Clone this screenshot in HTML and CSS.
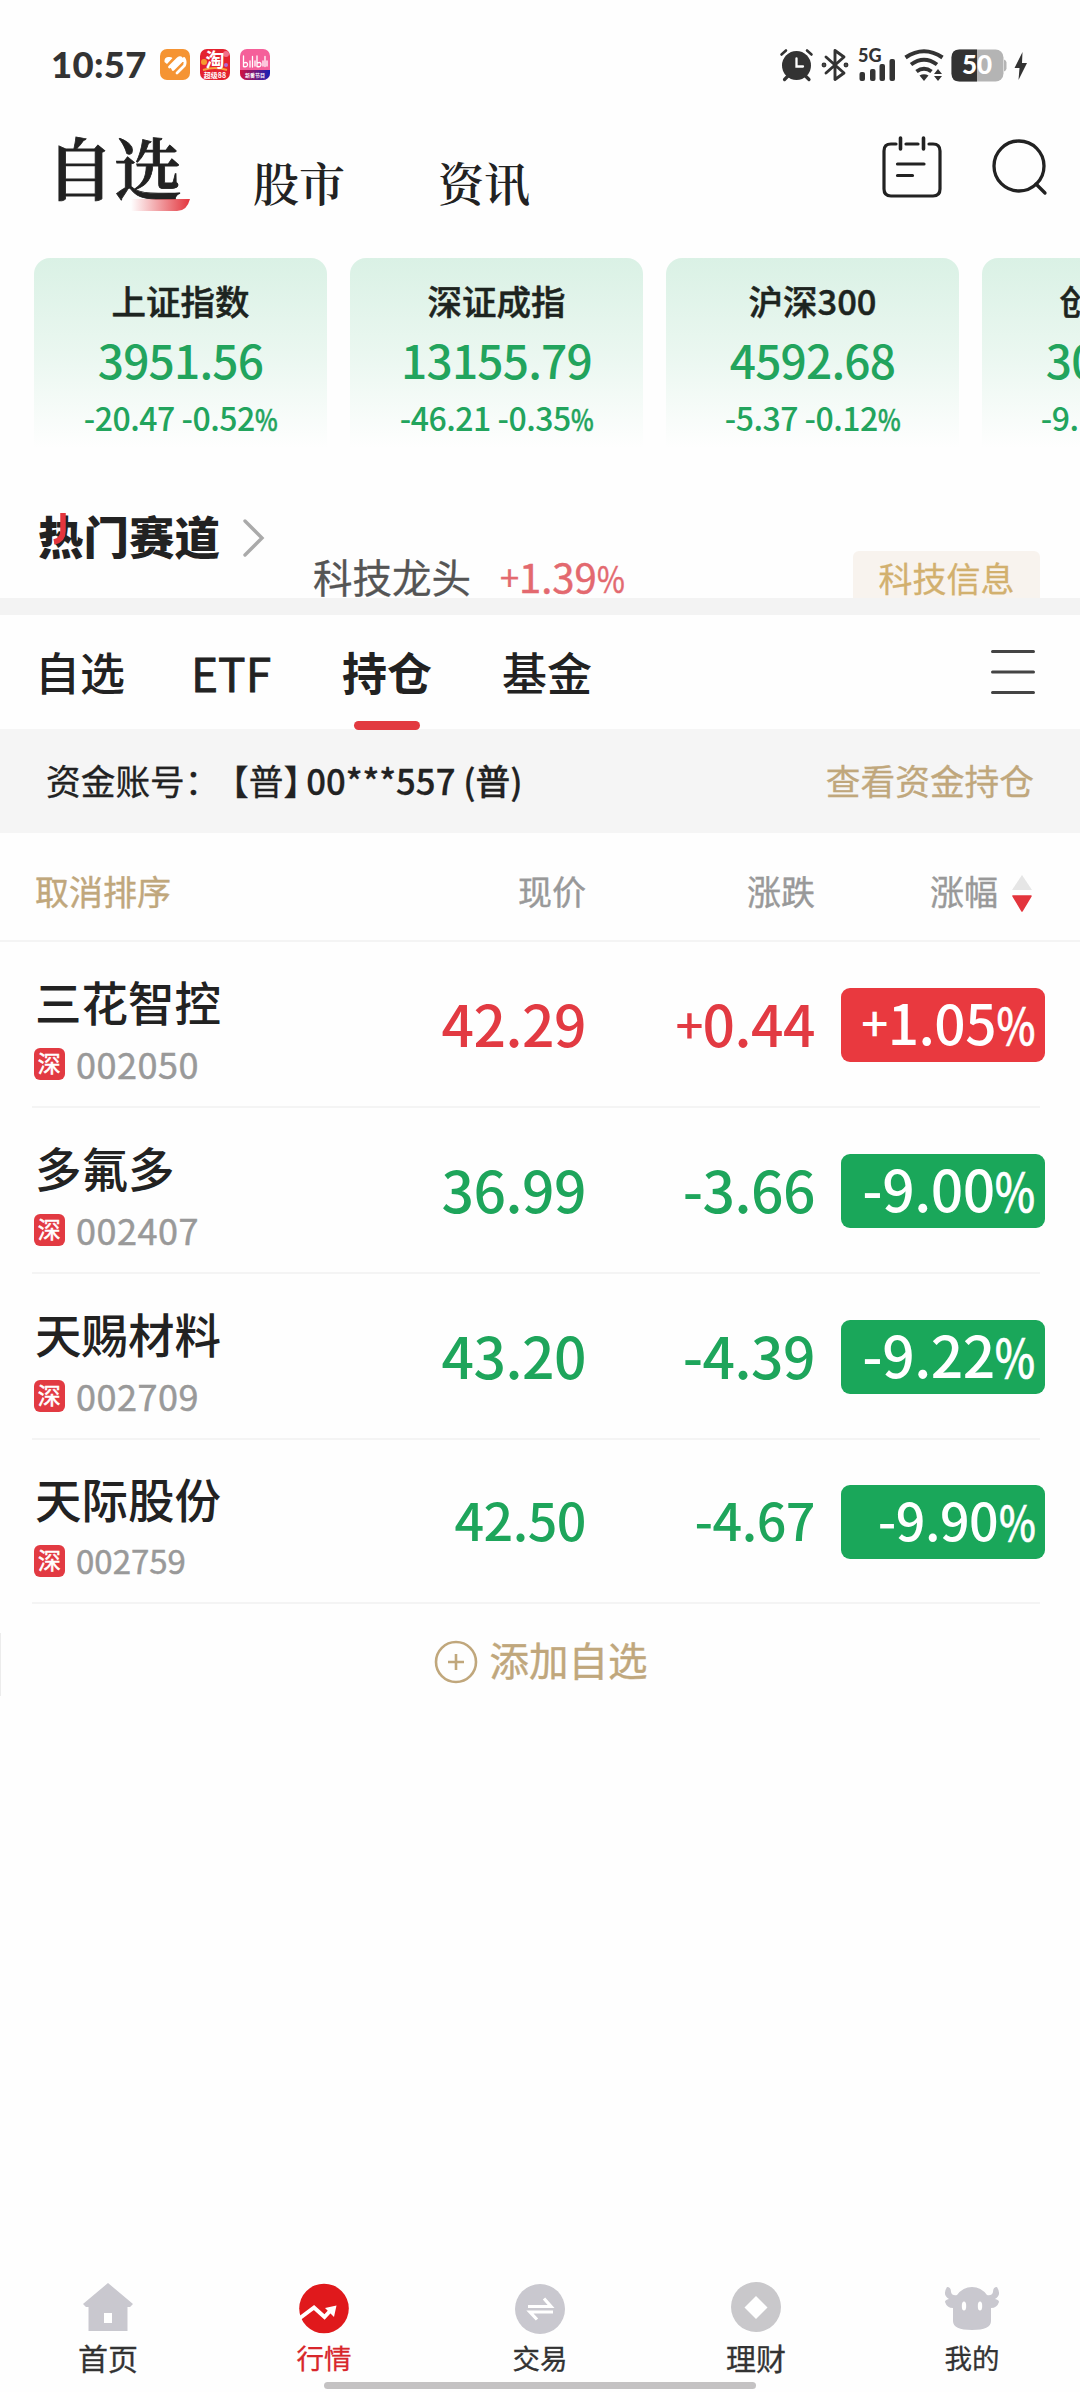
FILE: index.html
```html
<!DOCTYPE html>
<html lang="zh-CN">

<head>
	<meta charset="UTF-8">
	<title>自选 - 持仓</title>
	<meta name="viewport" content="width=device-width, initial-scale=1.0">
	<link rel="stylesheet" href="styles.css">
</head>

<body>

	<!-- Barre d'état -->
	<div class="statut">
		<span class="heure">10:57</span>
		<div class="applis">
			<svg width="30" height="31" viewBox="0 0 30 31">
				<rect width="30" height="31" rx="7" fill="#f59433" />
				<path d="M4.500 13 Q4 8.500 8 8 Q11 7.500 12.500 9 L7 15Z" fill="#fff" />
				<path d="M9.500 18 L17.500 10 Q20 7.500 21.500 9.500 L12 18.500 M17 24 L24.500 16.500 Q26 13 24 9.500 L13 20.500" fill="none" stroke="#fff" stroke-width="2.800" stroke-linecap="round" stroke-linejoin="round" />
			</svg>
			<svg width="30" height="31" viewBox="0 0 30 31">
				<rect width="30" height="31" rx="7" fill="#e4222f" />
				<circle cx="4" cy="13" r="3" fill="#f79a2e" />
				<circle cx="26" cy="5" r="3" fill="#f2718a" />
				<circle cx="26" cy="16" r="2" fill="#b06ad0" />
				<path d="M3 21 Q15 17 27 21" stroke="#f9a03c" stroke-width="2" fill="none" />
				<text x="15" y="18" class="mini" font-size="19">淘</text>
				<text x="15" y="29" class="mini" font-size="7">超级88</text>
			</svg>
			<svg width="30" height="31" viewBox="0 0 30 31">
				<defs>
					<linearGradient id="bas"><stop offset="0" stop-color="#d3123f" /><stop offset="1" stop-color="#1321b8" /></linearGradient>
					<clipPath id="coins"><rect width="30" height="31" rx="7" /></clipPath>
				</defs>
				<g clip-path="url(#coins)">
					<rect width="30" height="31" fill="#f5609a" />
					<rect y="21" width="30" height="10" fill="url(#bas)" />
				</g>
				<path d="M3.500 7V17.500q4 1 4-2t-3.500-1.500M10 12v6M12.500 7.500v10.500M15 12v5M17 7V17.500q4 1 4-2t-3.500-1.500M23 12v5M25 7.500v10M27 12v5" fill="none" stroke="#fff" stroke-width="1.300" stroke-linecap="round" />
				<text x="15" y="27.500" class="mini" font-size="5">新番节目</text>
			</svg>
		</div>
		<svg class="systeme" width="250" height="34" viewBox="0 0 250 34">
			<!-- alarme -->
			<g fill="none" stroke="#333" stroke-linecap="round">
				<circle cx="17.500" cy="17.500" r="14.500" fill="#333" stroke="none" />
				<path d="M2.500 6.500 L7 2.500 M28 2.500 L32.500 6.500" stroke-width="2.600" />
				<path d="M5.500 31.500 L9 28 M30 31.500 L26.500 28" stroke-width="3.200" />
				<path d="M17.500 10.500 V18.500 H24" stroke="#fff" stroke-width="2.300" />
			</g>
			<!-- bluetooth -->
			<g fill="none" stroke="#333" stroke-width="2.900">
				<path d="M47 9 L65 25 L56 31.500 V2.500 L65 9 L47 25" stroke-linejoin="round" stroke-linecap="round" />
				<circle cx="45" cy="17" r="1" />
				<circle cx="67" cy="17" r="1" />
			</g>
			<!-- réseau -->
			<text x="79" y="14" class="reseau">5G</text>
			<g fill="#333">
				<rect x="80.500" y="24" width="5.500" height="9" rx="2" />
				<rect x="91" y="21" width="5.500" height="12" rx="2" />
				<rect x="100.500" y="16" width="5.500" height="17" rx="2" />
				<rect x="110.500" y="11" width="5.500" height="22" rx="2" />
			</g>
			<!-- wifi -->
			<g fill="none" stroke="#333" stroke-width="4">
				<path d="M126.500 9.500 Q145 -3 163.500 9.500" />
				<path d="M132 16.500 Q145 7 158 16.500" />
				<path d="M137.500 23.500 Q145 18 152.500 23.500" />
			</g>
			<path d="M140.500 27.500 Q145 25 149.500 27.500 L145 33Z" fill="#333" />
			<path d="M159 21 L163 26 H155Z M159 33 L155 28 H163Z" fill="#333" />
			<!-- batterie -->
			<rect x="172.500" y="1.500" width="52" height="32" rx="8" fill="#b4b4b4" />
			<path d="M198 1.500 H180.500 Q172.500 1.500 172.500 9.500 V25.500 Q172.500 33.500 180.500 33.500 H198Z" fill="#333" />
			<path d="M225 11.500 q2.500 1 2.500 3 v6 q0 2 -2.500 3Z" fill="#b4b4b4" />
			<text x="198" y="26" class="charge">50</text>
			<path d="M243.500 4 L235.500 20 H240.500 L239.500 32 L248 15 H243Z" fill="#333" />
		</svg>
	</div>

	<!-- Titre -->
	<header class="entete">
		<a class="titre actif">自选<svg class="trait" width="60" height="12" viewBox="0 0 60 12">
				<defs><linearGradient id="rouge"><stop offset="0" stop-color="#e3353d" stop-opacity="0" /><stop offset="1" stop-color="#e3353d" /></linearGradient></defs>
				<path d="M0 0 H59 Q56 12 46 12 H0Z" fill="url(#rouge)" />
			</svg></a>
		<a class="titre">股市</a>
		<a class="titre">资讯</a>
		<svg class="agenda" width="60" height="64" viewBox="0 0 60 64" fill="none" stroke="#222" stroke-width="3.200" stroke-linecap="round">
			<path d="M14 10 H9 Q2 10 2 17 V55 Q2 62 9 62 H51 Q58 62 58 55 V17 Q58 10 51 10 H47 M24 10 H36" />
			<path d="M18.500 4 V15 M41.500 4 V15" stroke-width="3.600" />
			<path d="M15.500 30 H42 M15.500 41.500 H30.500" />
		</svg>
		<svg class="loupe" width="56" height="58" viewBox="0 0 56 58" fill="none" stroke="#222" stroke-width="3.300" stroke-linecap="round">
			<circle cx="27" cy="28" r="25" />
			<path d="M44 46 L53 55" />
		</svg>
	</header>

	<!-- Indices -->
	<section class="indices">
		<article class="indice">
			<h2>上证指数</h2>
			<strong>3951.56</strong>
			<p>-20.47 -0.52<i>%</i></p>
		</article>
		<article class="indice">
			<h2>深证成指</h2>
			<strong>13155.79</strong>
			<p>-46.21 -0.35<i>%</i></p>
		</article>
		<article class="indice">
			<h2>沪深300</h2>
			<strong>4592.68</strong>
			<p>-5.37 -0.12<i>%</i></p>
		</article>
		<article class="indice">
			<h2>创业板指</h2>
			<strong>3052.59</strong>
			<p>-9.17 -0.30<i>%</i></p>
		</article>
	</section>

	<!-- Secteurs -->
	<section class="secteurs">
		<h3>热门赛道<svg class="flamme" width="16" height="34" viewBox="0 0 16 34" fill="none" stroke="#e3353d" stroke-width="5.500">
				<path d="M11 1 V19 Q11 28 2 30" />
			</svg></h3>
		<svg class="chevron" width="22" height="40" viewBox="0 0 22 40" fill="none" stroke="#aaa" stroke-width="3.400" stroke-linecap="round">
			<path d="M2 3 L19 20 L2 37" />
		</svg>
		<span class="theme">科技龙头</span>
		<span class="hausse"><u>+</u>1.39<i>%</i></span>
		<span class="etiquette">科技信息</span>
	</section>

	<!-- Onglets -->
	<nav class="onglets">
		<a>自选</a>
		<a class="etf">ETF</a>
		<a class="actif">持仓</a>
		<a>基金</a>
		<svg width="46" height="46" viewBox="0 0 46 46" stroke="#444" stroke-width="3" stroke-linecap="round">
			<path d="M2.500 2.500 H43.500 M2.500 23 H43.500 M2.500 43.500 H43.500" />
		</svg>
	</nav>

	<div class="compte">
		<span>资金账号：<b class="ouvre">【</b>普】<b class="num">00***557 (普)</b></span>
		<a>查看资金持仓</a>
	</div>

	<!-- Liste -->
	<main>
		<div class="colonnes">
			<a>取消排序</a>
			<span>现价</span>
			<span>涨跌</span>
			<span class="tri">涨幅
				<svg width="22" height="40" viewBox="0 0 22 40">
					<path d="M11 1 L21 16 H1Z" fill="#e6e6e6" />
					<path d="M2 22 H20 L11 37Z" fill="#e3353d" stroke="#e3353d" stroke-width="1.500" stroke-linejoin="round" />
				</svg>
			</span>
		</div>

		<div class="ligne monte">
			<div class="valeur">
				<h4>三花智控</h4>
				<p><em>深</em>002050</p>
			</div>
			<span class="prix">42.29</span>
			<span class="prix"><u>+</u>0.44</span>
			<span class="taux"><u>+</u>1.05<i>%</i></span>
		</div>
		<div class="ligne">
			<div class="valeur">
				<h4>多氟多</h4>
				<p><em>深</em>002407</p>
			</div>
			<span class="prix">36.99</span>
			<span class="prix">-3.66</span>
			<span class="taux">-9.00<i>%</i></span>
		</div>
		<div class="ligne">
			<div class="valeur">
				<h4>天赐材料</h4>
				<p><em>深</em>002709</p>
			</div>
			<span class="prix">43.20</span>
			<span class="prix">-4.39</span>
			<span class="taux">-9.22<i>%</i></span>
		</div>
		<div class="ligne petite">
			<div class="valeur">
				<h4>天际股份</h4>
				<p><em>深</em>002759</p>
			</div>
			<span class="prix">42.50</span>
			<span class="prix">-4.67</span>
			<span class="taux">-9.90<i>%</i></span>
		</div>

		<a class="ajout">
			<svg width="44" height="44" viewBox="0 0 44 44" fill="none" stroke="#c0a77c" stroke-width="2.600">
				<circle cx="22" cy="22" r="20" />
				<path d="M14 22 H30 M22 14 V30" />
			</svg>
			<span>添加自选</span>
		</a>
	</main>

	<!-- Barre du bas -->
	<footer class="barre">
		<a class="grand">
			<svg width="52" height="52" viewBox="0 0 52 52">
				<path d="M26 1 L51 22 L48 25 H45.500 V49 H6.500 V25 H4 L1 22Z" fill="#c9c8cf" />
				<rect x="22" y="31" width="8" height="10" fill="#fff" />
			</svg>
			首页
		</a>
		<a class="actif">
			<svg width="52" height="52" viewBox="0 0 52 52">
				<circle cx="26" cy="26.500" r="24.800" fill="#e0191c" />
				<path d="M2 36 L16 25.500 L26.500 35 L33 28" fill="none" stroke="#fff" stroke-width="4" />
				<path d="M27 26 L38.500 23.500 L36 35Z" fill="#fff" />
			</svg>
			行情
		</a>
		<a>
			<svg width="52" height="52" viewBox="0 0 52 52">
				<circle cx="26" cy="27" r="25" fill="#c9c8cf" />
				<path d="M14 24.500 H37 L30 16.500 M39 30 H16 L23 37.500" fill="none" stroke="#fff" stroke-width="3.200" />
			</svg>
			交易
		</a>
		<a class="grand">
			<svg width="52" height="52" viewBox="0 0 52 52">
				<circle cx="26" cy="25" r="25" fill="#c9c8cb" />
				<path d="M26 14 L37.500 25.500 L26 37 L14.500 25.500Z" fill="#fff" />
			</svg>
			理财
		</a>
		<a>
			<svg width="56" height="52" viewBox="0 0 56 52" fill="#c9c8cf">
				<path d="M3 5 Q-2 13 5 17 Q1 18 1 20 Q3 26 9 26 V39 Q9 48 28 48 Q47 48 47 39 V26 Q53 26 55 20 Q55 18 51 17 Q58 13 53 5 Q49 5 49 10 Q48 14 43 13 Q37 5 28 5 Q19 5 13 13 Q8 14 7 10 Q7 5 3 5Z" />
				<ellipse cx="20" cy="24" rx="2.200" ry="4.500" fill="#fff" />
				<ellipse cx="36" cy="24" rx="2.200" ry="4.500" fill="#fff" />
			</svg>
			我的
		</a>
	</footer>
	<div class="accueil"></div>

</body>

</html>
```
FILE: styles.css
```css
/*Reset*/

* {
	margin: 0;
	padding: 0;
	box-sizing: border-box;
}

body {
	width: 1080px;
	height: 2392px;
	overflow: hidden;
	background-color: #fefefe;
	color: #222;
	font-family: "Noto Sans CJK SC", "Noto Sans", sans-serif;
	/*Conteneur flex en colonne*/
	display: flex;
	flex-direction: column;
}

svg {
	display: block;
	flex: none;
}

i, em {
	font-style: normal;
}

/*Signes % et + plus étroits que ceux de la police*/
i {
	display: inline-block;
	font-size: 0.92em;
	line-height: 1;
	margin-left: -0.16em;
	transform: scaleX(0.82);
	transform-origin: right center;
	-webkit-text-stroke: 0.5px;
}

u {
	display: inline-block;
	text-decoration: none;
	line-height: 1;
	margin-left: -0.08em;
	transform: scale(0.86);
	transform-origin: right center;
}

/*Barre d'état*/

.statut {
	height: 118px;
	padding: 48px 51px 0 51px;
	display: flex;
}

.heure {
	width: 109px;
	font: 900 36.5px/33px Lato, sans-serif;
	letter-spacing: 0.3px;
	color: #333;
}

.applis {
	display: flex;
	gap: 10px;
	padding-top: 1px;
}

.systeme {
	margin-left: auto;
}

.mini {
	fill: #fff;
	text-anchor: middle;
	font-weight: bold;
}

.reseau {
	font: 900 18px Lato, sans-serif;
	fill: #333;
}

.charge {
	font: 900 26px Lato, sans-serif;
	fill: #fff;
	text-anchor: middle;
}

/*Titre*/

.entete {
	height: 140px;
	padding: 0 32px 0 51px;
	display: flex;
	align-items: flex-start;
}

.titre {
	font-family: "Noto Serif CJK SC", "Noto Sans CJK SC", serif;
	font-weight: 600;
	font-size: 46px;
	line-height: 60px;
	padding-top: 33px;
	width: 185px;
}

.titre.actif {
	position: relative;
	font-size: 68px;
	line-height: 80px;
	padding-top: 8px;
	margin-left: -5px;
	width: 207px;
	-webkit-text-stroke: 0.8px #222;
}

.trait {
	position: absolute;
	left: 85px;
	top: 81px;
}

.agenda {
	margin: 16px 50px 0 auto;
}

.loupe {
	margin-top: 20px;
}

/*Indices*/

.indices {
	height: 207px;
	padding-left: 34px;
	overflow: hidden;
	display: flex;
	gap: 23px;
}

.indice {
	flex: 0 0 293px;
	height: 190px;
	padding-top: 18px;
	border-radius: 16px 16px 0 0;
	background: linear-gradient(to bottom, #daf1e5 0%, #eaf7f0 50%, #fefefe 100%);
	color: #22a45d;
	text-align: center;
	white-space: nowrap;
}

.indice h2 {
	color: #1d2420;
	font-size: 34.5px;
	font-weight: 500;
	line-height: 48px;
	-webkit-text-stroke: 0.5px #1d2420;
}

.indice strong {
	display: block;
	font-size: 46px;
	font-weight: 500;
	line-height: 71px;
	letter-spacing: -0.8px;
}

.indice p {
	font-size: 32px;
	font-weight: 500;
	line-height: 44px;
	letter-spacing: -0.5px;
}

/*Secteurs*/

.secteurs {
	height: 150px;
	padding: 38px 40px 0 38px;
	border-bottom: 17px solid #f3f3f3;
	overflow: hidden;
	display: flex;
	align-items: flex-start;
	white-space: nowrap;
}

.secteurs h3 {
	position: relative;
	font-size: 45.5px;
	font-weight: 900;
	line-height: 65px;
}

.flamme {
	position: absolute;
	left: 14px;
	top: 9px;
}

.chevron {
	margin: 15px 48px 0 23px;
}

.theme {
	color: #555;
	font-size: 39.5px;
	line-height: 60px;
	margin-top: 43px;
	-webkit-text-stroke: 0.3px;
}

.hausse {
	color: #e3696f;
	font-size: 40px;
	line-height: 60px;
	margin: 43px 0 0 29px;
	-webkit-text-stroke: 0.5px;
}

.etiquette {
	margin: 48px 0 0 auto;
	width: 187px;
	height: 60px;
	border-radius: 6px;
	background-color: #f8f3ee;
	color: #d2b06e;
	font-size: 34px;
	line-height: 53px;
	text-align: center;
	-webkit-text-stroke: 0.3px;
}

/*Onglets*/

.onglets {
	height: 114px;
	padding: 0 44px 0 35px;
	display: flex;
	align-items: center;
}

.onglets a {
	position: relative;
	height: 114px;
	font-size: 45px;
	font-weight: 500;
	line-height: 114px;
	margin-right: 66px;
}

.onglets .etf {
	font-size: 46px;
	font-weight: 400;
	margin-right: 71px;
	-webkit-text-stroke: 0.8px #222;
}

.onglets .actif {
	font-weight: 700;
	margin-right: 70px;
}

.onglets .actif::after {
	content: "";
	position: absolute;
	left: 12px;
	bottom: -1px;
	width: 66px;
	height: 9px;
	border-radius: 5px;
	background-color: #e23a40;
}

.onglets svg {
	margin-left: auto;
}

/*Compte*/

.compte {
	height: 104px;
	padding: 0 46px;
	background-color: #f5f5f5;
	font-size: 34.7px;
	line-height: 102px;
	display: flex;
	justify-content: space-between;
	-webkit-text-stroke: 0.3px;
}

.compte a, .colonnes a, .ajout {
	color: #c0a77c;
}

.compte b {
	font-weight: 500;
}

.compte .ouvre {
	margin-left: 12px;
	font-weight: 400;
}

.compte .num {
	margin-left: -12px;
}

/*Liste*/

.colonnes, .ligne {
	display: grid;
	grid-template-columns: 250px 304px 229px 230px;
	align-items: center;
}

.colonnes {
	height: 109px;
	padding-left: 32px;
	padding-top: 7px;
	border-bottom: 2px solid #f4f4f4;
	color: #999;
	font-size: 34px;
	text-align: right;
	-webkit-text-stroke: 0.4px;
}

.colonnes a {
	text-align: left;
	padding-left: 3px;
}

.tri {
	display: flex;
	justify-content: flex-end;
	align-items: center;
	gap: 13px;
	padding-right: 12px;
}

.tri svg {
	margin: 4px 0 -4px;
}

.ligne {
	height: 166px;
	margin: 0 40px 0 32px;
	border-bottom: 2px solid #f4f4f4;
	color: #1ea55b;
	font-size: 57px;
	font-weight: 500;
	letter-spacing: -0.5px;
	text-align: right;
}

.valeur {
	padding-top: 11px;
	text-align: left;
	letter-spacing: 0;
	white-space: nowrap;
}

.valeur h4 {
	color: #222;
	font-size: 46.5px;
	font-weight: 500;
	line-height: 66px;
	padding-left: 3px;
}

.valeur p {
	display: flex;
	align-items: center;
	gap: 11px;
	color: #999;
	font-size: 36px;
	font-weight: 400;
	line-height: 58px;
	letter-spacing: 0.5px;
	padding-left: 2px;
	-webkit-text-stroke: 0.5px;
}

.valeur em {
	width: 31px;
	height: 32px;
	margin-top: 3px;
	border-radius: 6px;
	background-color: #e23a42;
	color: #fff;
	font-size: 23px;
	line-height: 29px;
	text-align: center;
}

.prix {
	line-height: 80px;
	padding-bottom: 5px;
}

.taux {
	justify-self: end;
	width: 204px;
	height: 74px;
	margin-top: 1px;
	padding-right: 10px;
	border-radius: 9px;
	background-color: #1aa75a;
	color: #fff;
	line-height: 67px;
}

.monte {
	color: #e23a42;
}

.monte .taux {
	background-color: #e9393f;
	font-size: 55px;
}

/*Dernière ligne, chiffres un peu plus petits*/

.petite {
	height: 164px;
	font-size: 52px;
}

.petite .valeur p {
	font-size: 33px;
	letter-spacing: 0;
}

.ajout {
	height: 115px;
	display: flex;
	justify-content: center;
	align-items: center;
	gap: 12px;
	font-size: 39.5px;
	padding-left: 1px;
	/*Filet au bord gauche*/
	background: linear-gradient(#ececec, #ececec) no-repeat 0 29px / 1px 63px;
	-webkit-text-stroke: 0.4px;
}

.ajout span {
	margin-top: -7px;
}

/*Barre du bas*/

.barre {
	margin-top: auto;
	height: 100px;
	display: flex;
}

.barre a {
	flex: 1;
	display: flex;
	flex-direction: column;
	align-items: center;
	color: #333;
	font-size: 27.5px;
	line-height: 47px;
	-webkit-text-stroke: 0.3px;
}

.barre .grand {
	font-size: 30px;
}

.barre .actif {
	color: #d8262b;
}

.accueil {
	width: 432px;
	height: 7px;
	margin: 0 auto 3px;
	border-radius: 4px;
	background-color: #c4c2c3;
}
```
